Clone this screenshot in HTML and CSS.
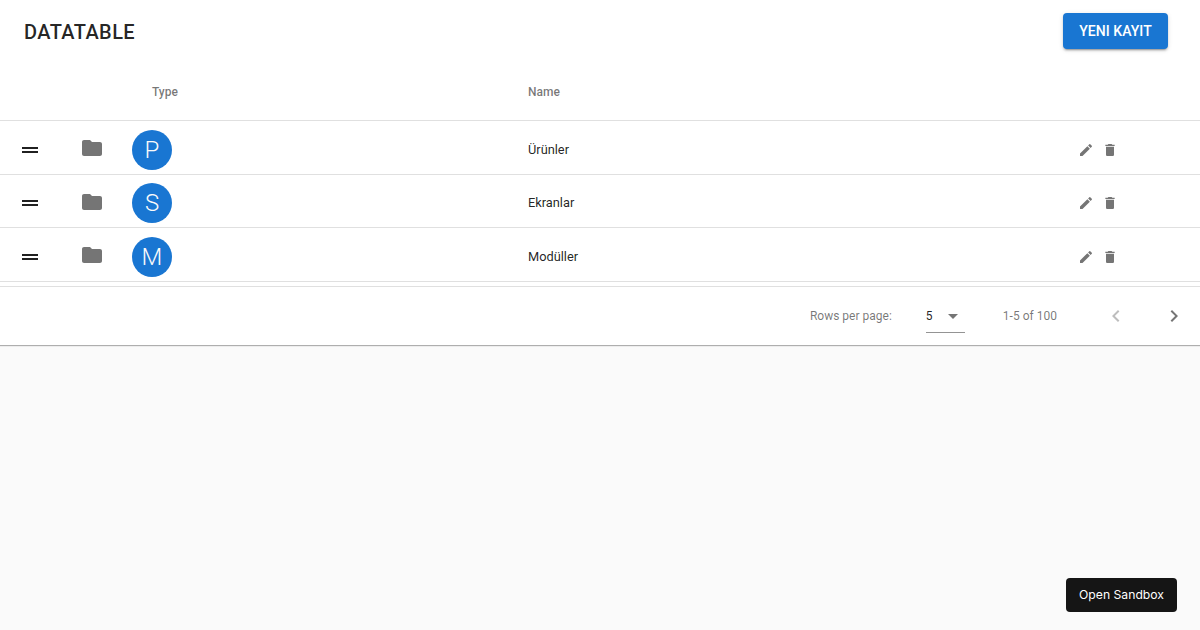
FILE: index.html
```html
<!DOCTYPE html>
<html lang="tr">
<head>
<meta charset="utf-8">
<title>Datatable</title>
<link rel="stylesheet" href="styles.css">
</head>
<body>
<main class="paper">
  <header class="toolbar">
    <h1 class="title">DATATABLE</h1>
    <button class="primary">YENI KAYIT</button>
  </header>
  <div class="row head">
    <span></span><span></span>
    <span class="type-label">Type</span>
    <span>Name</span>
    <span></span>
  </div>
  <div class="row body">
    <svg class="handle" viewBox="0 0 24 24"><path d="M20 9H4v2h16V9zM4 15h16v-2H4v2z"/></svg>
    <svg class="folder" viewBox="0 0 24 24"><path d="M10 4H4c-1.1 0-1.99.9-1.99 2L2 18c0 1.1.9 2 2 2h16c1.1 0 2-.9 2-2V8c0-1.1-.9-2-2-2h-8l-2-2z"/></svg>
    <div class="avatar">P</div>
    <span class="cell">Ürünler</span>
    <div class="actions">
      <svg class="act" viewBox="0 0 24 24"><path d="M3 17.25V21h3.75L17.81 9.94l-3.75-3.75L3 17.25zM20.71 7.04c.39-.39.39-1.02 0-1.41l-2.34-2.34a.996.996 0 0 0-1.41 0l-1.83 1.83 3.75 3.75 1.83-1.83z"/></svg>
      <svg class="act" viewBox="0 0 24 24"><path d="M6 19c0 1.1.9 2 2 2h8c1.1 0 2-.9 2-2V7H6v12zM19 4h-3.5l-1-1h-5l-1 1H5v2h14V4z"/></svg>
    </div>
  </div>
  <div class="row body">
    <svg class="handle" viewBox="0 0 24 24"><path d="M20 9H4v2h16V9zM4 15h16v-2H4v2z"/></svg>
    <svg class="folder" viewBox="0 0 24 24"><path d="M10 4H4c-1.1 0-1.99.9-1.99 2L2 18c0 1.1.9 2 2 2h16c1.1 0 2-.9 2-2V8c0-1.1-.9-2-2-2h-8l-2-2z"/></svg>
    <div class="avatar">S</div>
    <span class="cell">Ekranlar</span>
    <div class="actions">
      <svg class="act" viewBox="0 0 24 24"><path d="M3 17.25V21h3.75L17.81 9.94l-3.75-3.75L3 17.25zM20.71 7.04c.39-.39.39-1.02 0-1.41l-2.34-2.34a.996.996 0 0 0-1.41 0l-1.83 1.83 3.75 3.75 1.83-1.83z"/></svg>
      <svg class="act" viewBox="0 0 24 24"><path d="M6 19c0 1.1.9 2 2 2h8c1.1 0 2-.9 2-2V7H6v12zM19 4h-3.5l-1-1h-5l-1 1H5v2h14V4z"/></svg>
    </div>
  </div>
  <div class="row body">
    <svg class="handle" viewBox="0 0 24 24"><path d="M20 9H4v2h16V9zM4 15h16v-2H4v2z"/></svg>
    <svg class="folder" viewBox="0 0 24 24"><path d="M10 4H4c-1.1 0-1.99.9-1.99 2L2 18c0 1.1.9 2 2 2h16c1.1 0 2-.9 2-2V8c0-1.1-.9-2-2-2h-8l-2-2z"/></svg>
    <div class="avatar">M</div>
    <span class="cell">Modüller</span>
    <div class="actions">
      <svg class="act" viewBox="0 0 24 24"><path d="M3 17.25V21h3.75L17.81 9.94l-3.75-3.75L3 17.25zM20.71 7.04c.39-.39.39-1.02 0-1.41l-2.34-2.34a.996.996 0 0 0-1.41 0l-1.83 1.83 3.75 3.75 1.83-1.83z"/></svg>
      <svg class="act" viewBox="0 0 24 24"><path d="M6 19c0 1.1.9 2 2 2h8c1.1 0 2-.9 2-2V7H6v12zM19 4h-3.5l-1-1h-5l-1 1H5v2h14V4z"/></svg>
    </div>
  </div>
  <footer class="pager">
    <span class="rows-label">Rows per page:</span>
    <div class="select">
      <span>5</span>
      <svg class="caret" viewBox="0 0 24 24"><path d="M7 10l5 5 5-5z"/></svg>
    </div>
    <span class="range">1-5 of 100</span>
    <svg class="nav prev" viewBox="0 0 24 24"><path d="M15.41 7.41 14 6l-6 6 6 6 1.41-1.41L10.83 12z"/></svg>
    <svg class="nav next" viewBox="0 0 24 24"><path d="M10 6 8.59 7.41 13.17 12l-4.58 4.59L10 18l6-6z"/></svg>
  </footer>
</main>
<a class="sandbox">Open Sandbox</a>
</body>
</html>
```
FILE: styles.css
```css
* { box-sizing: border-box; }
html, body { height: 100%; }
body {
  margin: 0;
  background: #fafafa;
  font-family: Roboto, "Liberation Sans", sans-serif;
  color: rgba(0, 0, 0, 0.87);
  overflow: hidden;
}
.paper {
  background: #fff;
  box-shadow: 0 1px 1px rgba(0, 0, 0, 0.3);
  height: 345px;
}
.toolbar {
  height: 65px;
  display: flex;
  align-items: center;
  justify-content: space-between;
  padding: 0 32px 0 24px;
}
.title {
  margin: -1px 0 0;
  font-size: 20px;
  font-weight: 500;
  line-height: 1.6;
  letter-spacing: 0.4px;
}
.primary {
  width: 105px;
  height: 36px;
  margin-top: -3px;
  border: 0;
  border-radius: 4px;
  background: #1976d2;
  color: #fff;
  font: 500 14px/1.75 Roboto, sans-serif;
  letter-spacing: 0.05px;
  box-shadow: 0 3px 1px -2px rgba(0,0,0,.2), 0 2px 2px 0 rgba(0,0,0,.14), 0 1px 5px 0 rgba(0,0,0,.12);
}
.row {
  display: grid;
  grid-template-columns: 60px 72px 396px 1fr 123px;
  align-items: center;
  font-size: 12.8px;
  border-bottom: 1px solid #e0e0e0;
}
.head {
  height: 56px;
  padding-bottom: 2px;
  font-size: 12px;
  font-weight: 500;
  color: rgba(0, 0, 0, 0.54);
}
.type-label { padding-left: 20px; }
.body { height: 53.5px; padding-top: 5px; }
.cell { margin-top: -0.6px; }
.handle { width: 24px; height: 24px; margin-left: 18px; fill: #000; opacity: .87; }
.folder { width: 24px; height: 24px; margin: -3.4px 0 0 20px; fill: rgba(0, 0, 0, 0.54); }
.avatar {
  width: 40px;
  height: 40px;
  border-radius: 50%;
  background: #1976d2;
  color: #fafafa;
  font-size: 24px;
  font-weight: 300;
  display: flex;
  align-items: center;
  justify-content: center;
}
.actions { display: flex; gap: 8px; padding-left: 1px; }
.act { width: 16px; height: 16px; fill: rgba(0, 0, 0, 0.54); }
.pager {
  margin-top: 4px;
  height: 59.5px;
  border-top: 1px solid #e0e0e0;
  display: flex;
  align-items: center;
  justify-content: flex-end;
  font-size: 12px;
  color: rgba(0, 0, 0, 0.54);
}
.rows-label { margin-right: 34px; }
.select {
  width: 39px;
  height: 32px;
  display: flex;
  align-items: center;
  justify-content: space-between;
  border-bottom: 1px solid rgba(0, 0, 0, 0.42);
  color: rgba(0, 0, 0, 0.87);
  margin-right: 38px;
  margin-top: 2px;
}
.caret { width: 24px; height: 24px; margin-right: 0; fill: rgba(0, 0, 0, 0.54); }
.range { margin-right: 47px; letter-spacing: 0.02px; }
.nav { width: 24px; height: 24px; fill: rgba(0, 0, 0, 0.54); }
.prev { fill: rgba(0, 0, 0, 0.26); margin-right: 34px; }
.next { margin-right: 14px; }
.sandbox {
  position: fixed;
  right: 23px;
  bottom: 18px;
  width: 111px;
  height: 34px;
  padding-bottom: 1px;
  border-radius: 4px;
  background: #151515;
  color: #fff;
  font: 400 12.2px Inter, Roboto, sans-serif;
  display: flex;
  align-items: center;
  justify-content: center;
}
```
